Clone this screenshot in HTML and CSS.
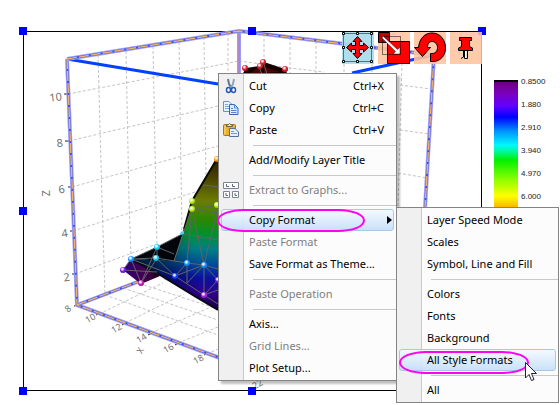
FILE: index.html
```html
<!DOCTYPE html>
<html lang="en">
<head>
<meta charset="utf-8">
<title>Graph layer</title>
<link rel="stylesheet" href="styles.css">
</head>
<body>
<main class="workspace">
  <section class="layer" aria-label="3D surface layer">
    <svg class="plot" viewBox="24 32 457 358" role="img" aria-label="3D surface plot">
      <defs>
        <linearGradient id="surf" gradientUnits="userSpaceOnUse" x1="200" y1="157" x2="194" y2="312">
          <stop offset="0" stop-color="#2a1800"/><stop offset=".14" stop-color="#4c4600"/>
          <stop offset=".28" stop-color="#6c7c00"/><stop offset=".4" stop-color="#2c8800"/>
          <stop offset=".5" stop-color="#009030"/><stop offset=".59" stop-color="#007f86"/>
          <stop offset=".7" stop-color="#00459a"/><stop offset=".78" stop-color="#0a10a0"/>
          <stop offset=".88" stop-color="#32008c"/><stop offset="1" stop-color="#100028"/>
        </linearGradient>
        <linearGradient id="shade" gradientUnits="userSpaceOnUse" x1="134" y1="262" x2="195" y2="250">
          <stop offset="0" stop-color="#000" stop-opacity=".7"/><stop offset="1" stop-color="#000" stop-opacity="0"/>
        </linearGradient>
        <linearGradient id="under" x1="0" y1="0" x2="1" y2="0">
          <stop offset="0" stop-color="#2c0070"/><stop offset=".6" stop-color="#460050"/><stop offset="1" stop-color="#180014"/>
        </linearGradient>
        <radialGradient id="gloss" cx=".4" cy=".35" r=".65">
          <stop offset="0" stop-color="#fff"/><stop offset=".25" stop-color="#fff" stop-opacity=".75"/>
          <stop offset=".6" stop-color="#fff" stop-opacity="0"/><stop offset="1" stop-color="#000" stop-opacity=".3"/>
        </radialGradient>
      </defs>
      <g class="grid">
        <path d="M98 55L102 200L105 294M126 51L129 200L131 258M153 46L156 200L157 247M179 42L182 233M204 37L206 176M228 33V73"/>
        <path d="M68 94L239 61M69 141L218 106M72 187L218 146M73 231L195 192M75 274L154 245"/>
        <path d="M239 61L290 68L324 72M264 34V73M290 37V73M316 41V73M344 64V73M372 64V73M402 63L398 207"/>
        <path d="M400 85L431 89M400 130L430 134M398 173L427 178"/>
        <path d="M99 314L163 283M125 323L184 294M151 333L218 304M178 343L218 327M207 354L218 349"/>
        <path d="M105 295L218 335M123 288L218 320M144 285L218 309M164 279L218 297"/>
      </g>
      <g class="ticks">
        <path d="M64 94H69M65 141H70M68 187H73M70 231H75M72 274H77M74 306L78 305M96 315L101 313M122 325L127 322M148 335L154 332M175 345L180 342M204 355L209 353"/>
      </g>
      <path class="axis-halo faint" d="M239 31V73"/>
      <path class="axis-core faint" d="M239 31V73"/>
      <path class="blue-edge" d="M67 59L218 84M352 73L434 55"/>
      <path class="axis-halo" d="M67 59L239 31L434 55L425 208M67 59L77 305L220 358M77 305L140 281"/>
      <path class="axis-core" d="M67 59L239 31L434 55L425 208M67 59L77 305L220 358M77 305L140 281"/>
      <path class="axis-gold" d="M67 59L239 31L434 55L425 208M67 59L77 305L220 358M77 305L140 281"/>

      <path fill="#180000" d="M242 75L246 68L260 66L264 62L285 69L288 75Z"/>
      <path fill="#4c0505" d="M249 74L259 67L262 74ZM264 73V67L280 72Z"/>
      <path class="wire" d="M259 67L262 74M264 64L267 74"/>
      <path fill="url(#under)" d="M123 270L131 259L160 276L141 284Z"/>
      <path fill="#02060a" d="M131 259L157 247L182 234L190 210L185 262Z"/>
      <path fill="url(#surf)" d="M131 259L174 261L184 229L192 201L218 156V310L196 297L160 275Z"/>
      <path fill="url(#shade)" d="M131 259L174 261L184 229L200 240L218 310L196 297L160 275Z"/>
      <path fill="none" stroke="#080812" stroke-width="2" d="M131 259L160 275L196 297L218 310"/>
      <path fill="none" stroke="#0a0d00" stroke-width="2" d="M184 229L192 201L218 157"/>
      <g class="wire">
        <path d="M123 270L131 259L141 283L157 247V258L141 283M123 270L157 272M131 259L157 247L182 234M157 247L174 254"/>
        <path d="M131 259L156 258L187 263L204 265L218 269M156 258L175 276L187 263V283M131 259L175 276L204 295L218 304"/>
        <path d="M192 201V209L187 263M192 209L204 265L218 208M192 209L218 205M192 209L218 213M190 213L174 261"/>
        <path d="M184 234L218 240M203 185L218 187M175 276L204 265V295L218 280L204 265M187 283L204 265M204 295L218 290"/>
      </g>
      <g class="balls">
        <g fill="#d81020"><circle cx="245" cy="68" r="3"/><circle cx="260" cy="66" r="3"/><circle cx="263" cy="62" r="3"/><circle cx="285" cy="69" r="3"/></g>
        <circle fill="#ff9000" cx="217" cy="159" r="3"/>
        <g fill="#b4f000"><circle cx="192" cy="201" r="3"/><circle cx="192" cy="209" r="3"/><circle cx="217" cy="205" r="3"/></g>
        <g fill="#10c8f4"><circle cx="157" cy="247" r="3"/><circle cx="156" cy="258" r="3"/></g>
        <path fill="#30d8f0" d="M184 231Q180 231 180 235L184 234Z"/>
        <g fill="#1090ff"><circle cx="131" cy="259" r="3"/><circle cx="187" cy="263" r="3"/><circle cx="204" cy="265" r="3"/></g>
        <circle fill="#1038f8" cx="175" cy="276" r="3"/>
        <g fill="#7010f0"><circle cx="123" cy="270" r="3"/><circle cx="218" cy="280" r="3"/></g>
        <circle fill="#a818e8" cx="204" cy="295" r="3"/><circle fill="#b818a8" cx="141" cy="283" r="3"/>
        <g fill="url(#gloss)">
          <circle cx="245" cy="68" r="3"/><circle cx="260" cy="66" r="3"/><circle cx="263" cy="62" r="3"/><circle cx="285" cy="69" r="3"/>
          <circle cx="217" cy="159" r="3"/><circle cx="192" cy="201" r="3"/><circle cx="192" cy="209" r="3"/><circle cx="217" cy="205" r="3"/>
          <circle cx="157" cy="247" r="3"/><circle cx="156" cy="258" r="3"/><circle cx="131" cy="259" r="3"/><circle cx="187" cy="263" r="3"/>
          <circle cx="204" cy="265" r="3"/><circle cx="175" cy="276" r="3"/><circle cx="123" cy="270" r="3"/><circle cx="218" cy="280" r="3"/>
          <circle cx="204" cy="295" r="3"/><circle cx="141" cy="283" r="3"/>
        </g>
      </g>
      <g class="axis-text">
        <text transform="translate(56 101) rotate(-6)">10</text>
        <text transform="translate(60 147) rotate(-6)">8</text>
        <text transform="translate(62 193) rotate(-8)">6</text>
        <text transform="translate(65 237) rotate(-8)">4</text>
        <text transform="translate(67 281) rotate(-8)">2</text>
        <text transform="translate(50 193) rotate(-92)">Z</text>
        <g class="floor-text">
          <text transform="translate(70 311) rotate(-40)">8</text>
          <text transform="translate(92 321) rotate(-30)">10</text>
          <text transform="translate(118 331) rotate(-30)">12</text>
          <text transform="translate(143 341) rotate(-30)">14</text>
          <text transform="translate(170 351) rotate(-30)">16</text>
          <text transform="translate(200 362) rotate(-30)">18</text>
          <text transform="translate(143 352) rotate(-62)">X</text>
          <text transform="translate(259 387) rotate(-30)">22</text>
        </g>
      </g>
    </svg>
    <span class="handle top left"></span><span class="handle top center"></span><span class="handle top right"></span>
    <span class="handle middle left"></span><span class="handle middle right"></span>
    <span class="handle bottom left"></span><span class="handle bottom center"></span><span class="handle bottom right"></span>
    <div class="tools" role="toolbar" aria-label="Layer tools">
      <button class="tool active" type="button" aria-label="Move">
        <svg viewBox="0 0 32 32"><rect x="1.500" y="1.500" width="28" height="28" fill="none" stroke="#000" stroke-dasharray="1 1"/>
          <g fill="#fff" stroke="#000"><path d="M.5.5h2v2h-2zM14.500.5h2v2h-2zM28.500.5h2v2h-2zM.5 14.500h2v2h-2zM28.500 14.500h2v2h-2zM.5 28.500h2v2h-2zM14.500 28.500h2v2h-2zM28.500 28.500h2v2h-2z"/></g>
          <path fill="#f00" stroke="#000" d="M15.500 4.500L20 9.500H17.500V13.500H21.500V11L26.500 15.500L21.500 20V17.500H17.500V21.500H20L15.500 26.500L11 21.500H13.500V17.500H9.500V20L4.500 15.500L9.500 11V13.500H13.500V9.500H11Z"/></svg>
      </button>
      <button class="tool" type="button" aria-label="Resize">
        <svg viewBox="0 0 32 32"><path fill="#c00000" stroke="#000" d="M.5.5h11v10H.5z"/><path fill="#f00" stroke="#000" d="M9.500 9.500h22v22h-22z"/>
          <path fill="none" stroke="#000" stroke-dasharray="1 1" d="M4.500 4.500h18v18h-18z"/>
          <path fill="#fff" stroke="#400" stroke-width=".5" d="M5 4L19.500 17.500L22 15V22H15L17.500 19.500L4 6Z"/></svg>
      </button>
      <button class="tool" type="button" aria-label="Rotate">
        <svg viewBox="0 0 32 32"><path fill="#f00" stroke="#000" d="M.5 15.500H4.500C5.500 6 11 1 18 1C26 1 31.500 7.500 31.500 16C31.500 24 26 29.500 19 29.500H16.500V21.500H18C21.500 21.500 23.500 19 23.500 15.500C23.500 12 21 9.500 18 9.500C15 9.500 13.500 12 13.500 15.500H16.500L8.500 24.500Z"/></svg>
      </button>
      <button class="tool" type="button" aria-label="Pin">
        <svg viewBox="0 0 32 32"><path fill="#ddd" stroke="#000" d="M13.500 18V25L11 26.500M17.500 18V26.500H14.500V18"/><path stroke="#fff" d="M15.500 18V26"/>
          <path fill="#f00" stroke="#000" d="M9.500 5.500H21.500V8.500H19.500V14.500L22.500 16V18.500H8.500V16L11.500 14.500V8.500H9.500Z"/></svg>
      </button>
    </div>
  </section>

  <aside class="legend" aria-label="Colour scale">
    <div class="ramp"></div>
    <ul class="levels"><li>0.8500</li><li>1.880</li><li>2.910</li><li>3.940</li><li>4.970</li><li>6.000</li></ul>
  </aside>

  <div class="menu context" role="menu">
    <button role="menuitem" type="button">
      <svg class="icon" viewBox="0 0 16 16"><path d="M5 1L6 6L9 11" stroke="#607890" stroke-width="2" fill="none"/><path d="M11 1L10 6L7 11" stroke="#8ea4b8" stroke-width="2" fill="none"/><ellipse cx="5.500" cy="12" rx="2" ry="2.500" fill="#fff" stroke="#2859b8" stroke-width="1.500"/><ellipse cx="10.500" cy="12" rx="2" ry="2.500" fill="#fff" stroke="#2859b8" stroke-width="1.500"/></svg>
      Cut<kbd>Ctrl+X</kbd></button>
    <button role="menuitem" type="button">
      <svg class="icon" viewBox="0 0 16 16"><path d="M.5 1.500H6L8.500 4V11.500H.5Z" fill="#eaf2fc" stroke="#6f91c4"/><path d="M2 4.500H5M2 6.500H6M2 8.500H6" stroke="#7fa8e0"/><path d="M6.500 4.500H11.500L15 8V14.500H6.500Z" fill="#dceafb" stroke="#3c66b0"/><path d="M11.500 4.500V8H15M8 8.500H10M8 10.500H13.500M8 12.500H13.500" stroke="#5688d0" fill="none"/></svg>
      Copy<kbd>Ctrl+C</kbd></button>
    <button role="menuitem" type="button">
      <svg class="icon" viewBox="0 0 16 16"><rect x=".5" y="2.500" width="12" height="11" rx="1" fill="#ebb02c" stroke="#a87820"/><path d="M2 4V12" stroke="#ffe088"/><path d="M3.500 4.500V3H5Q6.500 0 8 3H9.500V4.500Z" fill="#f4ead0" stroke="#6c6444"/><path d="M6.500 6.500H12L15.500 10V14.500H6.500Z" fill="#e4edf8" stroke="#56709c"/><path d="M8 9.500H11M8 11.500H14" stroke="#7b9cca"/></svg>
      Paste<kbd>Ctrl+V</kbd></button>
    <hr>
    <button role="menuitem" type="button">Add/Modify Layer Title</button>
    <hr>
    <button role="menuitem" type="button" disabled>
      <svg class="icon" viewBox="0 0 16 16"><path fill="#fff" stroke="#7c8494" d="M.5.5h15v6H.5zM.5 9.500h6v6h-6zM9.500 9.500h6v6h-6z"/><path fill="none" stroke="#606878" d="M3.500 2V4.500H6M9.500 2V4.500H12M3 11V13.500H5M12 11V13.500H14"/></svg>
      Extract to Graphs...</button>
    <hr>
    <button role="menuitem" type="button" class="lit" aria-haspopup="menu">Copy Format<span class="arrow"></span></button>
    <button role="menuitem" type="button" disabled>Paste Format</button>
    <button role="menuitem" type="button">Save Format as Theme...</button>
    <hr>
    <button role="menuitem" type="button" disabled>Paste Operation</button>
    <hr>
    <button role="menuitem" type="button">Axis...</button>
    <button role="menuitem" type="button" disabled>Grid Lines...</button>
    <button role="menuitem" type="button">Plot Setup...</button>
    <span class="ring ring-parent"></span>
  </div>

  <div class="menu submenu" role="menu">
    <button role="menuitem" type="button">Layer Speed Mode</button>
    <button role="menuitem" type="button">Scales</button>
    <button role="menuitem" type="button">Symbol, Line and Fill</button>
    <hr>
    <button role="menuitem" type="button">Colors</button>
    <button role="menuitem" type="button">Fonts</button>
    <button role="menuitem" type="button">Background</button>
    <button role="menuitem" type="button" class="lit">All Style Formats</button>
    <hr>
    <button role="menuitem" type="button">All</button>
    <span class="ring ring-child"></span>
    <svg class="pointer" viewBox="0 0 12 20"><path fill="#fff" stroke="#223" d="M.5.5V16L4 12.500L6.500 18.500L9 17.500L6.500 11.500H11.500Z"/></svg>
  </div>
</main>
</body>
</html>
```
FILE: styles.css
```css
* { box-sizing: border-box; }

body {
  margin: 0;
  background: #fff;
  font: 11px/20px "Noto Sans", "Open Sans", sans-serif;
  color: #000;
}

.workspace {
  position: relative;
  display: flex;
  align-items: flex-start;
  padding: 31px 0 14px 23px;
}

.layer {
  position: relative;
  flex: 1;
  border: 1px solid #000;
}

.plot {
  display: block;
  width: 100%;
  height: auto;
  overflow: visible;
}

.grid path { fill: none; stroke: #c4c4c4; stroke-dasharray: 3 2; }
.ticks path { fill: none; stroke: #222; }
.blue-edge { fill: none; stroke: #0040ff; stroke-width: 3; }
.axis-halo { fill: none; stroke: #9c9cfc; stroke-width: 4; }
.axis-core { fill: none; stroke: #3454e8; stroke-width: 2; }
.axis-gold { fill: none; stroke: #f0b070; stroke-width: 1.4; stroke-dasharray: 10 2; }
.axis-core.faint { stroke: #b088c8; }
.wire, .wire path { fill: none; stroke: #606468; stroke-width: 1; }
.axis-text { font-size: 11px; fill: #707070; text-anchor: middle; }
.floor-text { font-size: 9px; }

.handle {
  position: absolute;
  width: 8px;
  height: 8px;
  background: #00f;
}
.handle.top { top: -5px; }
.handle.middle { top: calc(50% - 4px); }
.handle.bottom { bottom: -5px; }
.handle.left { left: -5px; }
.handle.center { left: calc(50% - 5px); }
.handle.right { right: -5px; }

.tools {
  position: absolute;
  top: 0;
  right: -1px;
  display: flex;
  gap: 4px;
}
.tool {
  width: 32px;
  height: 32px;
  padding: 0;
  border: 0;
  background: rgba(255, 196, 158, 0.88);
}
.tool.active { background: rgba(168, 220, 236, 0.92); }
.tool svg { display: block; }

.legend {
  display: flex;
  margin: 49px 0 0 12px;
}
.ramp {
  width: 24px;
  border-top: 2px solid #000;
  background: linear-gradient(#6c007c, #7c00c0 12px, #6000ff 24px, #0000ff 35px, #0090ff 49px, #00f8ff 63px, #00f890 70px, #00f000 78px, #90ff00 98px, #ffff00 114px, #ffb000 126px, #ff4000 150px);
}
.levels {
  width: 42px;
  margin: -10px 0 0;
  padding: 0 0 20px 3px;
  list-style: none;
  font: 8px/23px "Liberation Sans", sans-serif;
  color: #222;
}

.menu {
  position: absolute;
  display: flex;
  flex-direction: column;
  padding: 1px 2px;
  border: 1px solid #848484;
  background: linear-gradient(to right, #f0f0f0 24px, #c8c8c8 24px, #c8c8c8 25px, #fcfcfc 25px);
}
.context {
  left: 218px;
  top: 73px;
  width: 179px;
  box-shadow: 3px 3px 2px rgba(0, 0, 0, 0.25);
}
.submenu {
  left: 396px;
  top: 207px;
  width: 163px;
}

.menu button {
  position: relative;
  display: flex;
  align-items: center;
  height: 22px;
  padding: 0 9px 0 27px;
  border: 1px solid transparent;
  border-radius: 3px;
  background: none;
  font: inherit;
  color: inherit;
  text-align: left;
  white-space: nowrap;
}
.menu button:disabled { color: #808080; }
.menu button.lit {
  border-color: #a8c8e8;
  background: linear-gradient(rgba(244, 249, 255, 0.9), rgba(196, 222, 250, 0.9));
}
.menu kbd { margin-left: auto; font: inherit; }
.menu hr {
  width: auto;
  height: 1px;
  margin: 4px -2px 3px 32px;
  border: 0;
  background: #c8c8c8;
}
.icon {
  position: absolute;
  left: 1px;
  top: 2px;
  width: 16px;
  height: 16px;
}
.arrow {
  position: absolute;
  right: 1px;
  border: 4px solid transparent;
  border-left: 5px solid #000;
  border-right: 0;
}

.ring {
  position: absolute;
  height: 23px;
  border: 2px solid #ff00f0;
  border-radius: 28px / 12px;
}
.ring-parent { left: -2px; top: 135px; width: 148px; }
.ring-child { left: 2px; top: 143px; width: 130px; }
.pointer {
  position: absolute;
  left: 128px;
  top: 154px;
  width: 12px;
  height: 20px;
}
```
